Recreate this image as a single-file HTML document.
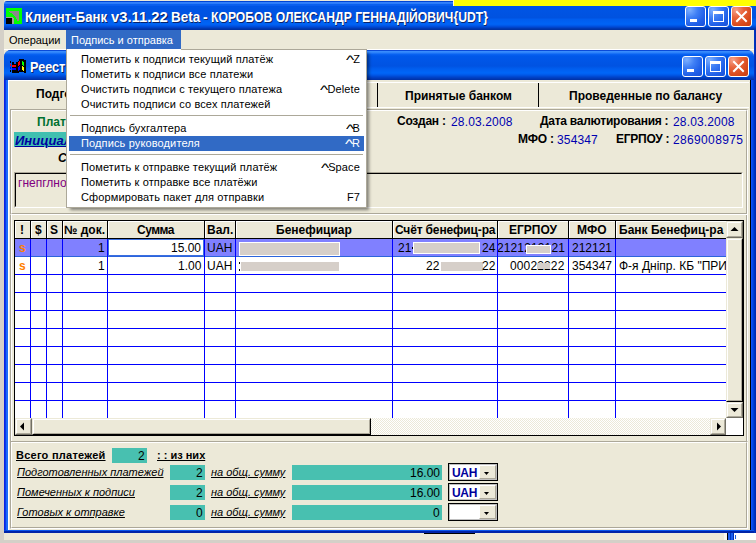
<!DOCTYPE html>
<html><head><meta charset="utf-8">
<style>
*{box-sizing:border-box}
html,body{margin:0;padding:0}
body{width:756px;height:543px;overflow:hidden;position:relative;background:#d4d0c8;font-family:"Liberation Sans",sans-serif;font-size:11px;color:#000}
.a{position:absolute}
.t{position:absolute;white-space:pre;line-height:1}
.tb{background:linear-gradient(to bottom,#0044d4 0px,#0044d4 1px,#3684fc 1px,#2878f8 3px,#0a62f0 3px,#0a5cec 5px,#0055e5 5px,#0052e0 17px,#005cee 18px,#0064f6 23px,#005ef0 24px,#0048d4 26px,#0034a8 28px,#0030a0 29px)}
.mtb{background:linear-gradient(to bottom,#0a4ad8 0px,#0a4ad8 1px,#3d8fff 1px,#2a7ff8 3px,#0a64f4 4px,#0058ea 6px,#0053e2 16px,#005eef 19px,#0066f8 23px,#0058e8 25px,#0044cc 27px,#0030a4 30px)}
.btn{position:absolute;width:21px;height:21px;border:1px solid #fff;border-radius:3px;background:radial-gradient(circle at 20% 15%,#7db0ff 0,#3f7ff5 35%,#1f5fe8 70%,#1850d8 100%)}
.btnc{background:radial-gradient(circle at 20% 15%,#f5a088 0,#e8643c 35%,#d84a1c 70%,#c83e10 100%)}
.mi{position:absolute;left:0;width:300px;height:15px}
.mi span{position:absolute;top:1px;white-space:pre;line-height:13px}
.mi .l{left:15px}
.mi .r{right:8px}
.hl{background:#316ac5;color:#fff}
.sep{position:absolute;left:3px;width:294px;height:2px;border-top:1px solid #aca899;border-bottom:1px solid #fff}
.b{font-weight:bold}
.blue{color:#0000b0;letter-spacing:0.15px}
</style></head><body>

<!-- main window bg -->
<div class="a" style="left:4px;top:0;width:752px;height:540px;background:#ece9d8"></div>

<!-- main title bar -->
<div class="a tb" style="left:4px;top:1px;width:752px;height:29px;border-top-left-radius:3px"></div>
<!-- yellow strip -->
<div class="a" style="left:453px;top:0;width:303px;height:6px;background:#ffff00"></div>
<div class="a" style="left:453px;top:0;width:1px;height:6px;background:#fff8e0"></div>

<!-- app icon -->
<svg class="a" style="left:6px;top:8px" width="16" height="16" viewBox="0 0 16 16" shape-rendering="crispEdges">
<rect x="0" y="0" width="16" height="16" fill="#00ff00"/>
<path d="M3 3H13V13H11V11H10V9H9V8H8V7H7V6H6V5H4V4H3Z" fill="#8a8a8a"/>
<rect x="0" y="9" width="7" height="1" fill="#a0a0a0"/>
<rect x="6" y="10" width="2" height="6" fill="#a0a0a0"/>
<rect x="0" y="10" width="6" height="6" fill="#000"/>
</svg>
<!-- title text -->
<div class="t b" style="left:25px;top:10px;font-size:14px;color:#fff;transform-origin:0 0;text-shadow:1px 1px 0 #0a246a;transform:scaleX(0.942)">Клиент-Банк</div>
<div class="t b" style="left:111px;top:10px;font-size:14px;color:#fff;transform-origin:0 0;text-shadow:1px 1px 0 #0a246a;transform:scaleX(1.058)">v3.11.22</div>
<div class="t b" style="left:171px;top:10px;font-size:14px;color:#fff;transform-origin:0 0;text-shadow:1px 1px 0 #0a246a;transform:scaleX(0.96)">Beta</div>
<div class="t b" style="left:203px;top:10px;font-size:14px;color:#fff;transform-origin:0 0;text-shadow:1px 1px 0 #0a246a">-</div>
<div class="t b" style="left:211px;top:10px;font-size:14px;color:#fff;transform-origin:0 0;text-shadow:1px 1px 0 #0a246a;transform:scaleX(0.870)">КОРОБОВ ОЛЕКСАНДР ГЕННАДІЙОВИЧ{UDT}</div>
<!-- main title buttons -->
<div class="btn" style="left:685px;top:6px"><div class="a" style="left:4px;top:12px;width:7px;height:3px;background:#fff"></div></div>
<div class="btn" style="left:708px;top:6px"><div class="a" style="left:4px;top:4px;width:11px;height:11px;border:1px solid #fff;border-top-width:3px"></div></div>
<div class="btn btnc" style="left:731px;top:6px">
<svg class="a" style="left:0;top:0" width="19" height="19" viewBox="0 0 19 19"><path d="M5 5 L14 14 M14 5 L5 14" stroke="#fff" stroke-width="2" stroke-linecap="square"/></svg></div>

<!-- right main frame -->
<div class="a" style="left:754px;top:30px;width:1px;height:510px;background:#0034c4"></div><div class="a" style="left:755px;top:30px;width:1px;height:510px;background:#002cb0"></div>

<!-- menu bar -->
<div class="a" style="left:4px;top:30px;width:750px;height:19px;background:#ece9d8"></div>
<div class="t" style="left:9px;top:35px">Операции</div>
<div class="a hl" style="left:66px;top:30px;width:115px;height:19px"></div>
<div class="t" style="left:71px;top:35px;color:#fff">Подпись и отправка</div>
<div class="a" style="left:4px;top:49px;width:750px;height:1px;background:#fff"></div>

<!-- MDI window frame -->
<div class="a" style="left:4px;top:50px;width:750px;height:483px;background:#0046dc;border-top-left-radius:7px;border-top-right-radius:7px"></div>
<div class="a mtb" style="left:4px;top:50px;width:750px;height:30px;border-top-left-radius:7px;border-top-right-radius:7px"></div>
<div class="a" style="left:4px;top:80px;width:1px;height:450px;background:#0a22e0"></div>
<div class="a" style="left:5px;top:80px;width:1px;height:450px;background:#0838ec"></div>
<div class="a" style="left:6px;top:80px;width:2px;height:450px;background:#1a6af8"></div>
<div class="a" style="left:751px;top:80px;width:1px;height:450px;background:#0a52f8"></div><div class="a" style="left:752px;top:80px;width:1px;height:450px;background:#0848e8"></div><div class="a" style="left:753px;top:80px;width:1px;height:450px;background:#0040d8"></div>
<div class="a" style="left:4px;top:531px;width:750px;height:2px;background:#0024a8"></div><div class="a" style="left:7px;top:530px;width:747px;height:1px;background:#0a56ec"></div>
<!-- client -->
<div class="a" style="left:8px;top:80px;width:743px;height:450px;background:#ece9d8"></div>
<div class="a" style="left:750px;top:80px;width:1px;height:450px;background:#000"></div>

<!-- MDI icon (windows flag) -->
<svg class="a" style="left:8px;top:56px" width="20" height="20" viewBox="0 0 20 20" shape-rendering="crispEdges">
<path d="M8 6H10V5H11V3H16V4H18V17H16V16H11V17H4V15H8Z" fill="#000"/>
<rect x="2" y="5" width="1" height="2" fill="#000"/><rect x="2" y="8" width="1" height="2" fill="#f00"/><rect x="2" y="11" width="1" height="2" fill="#00f"/><rect x="2" y="14" width="1" height="2" fill="#000"/>
<rect x="4" y="6" width="2" height="2" fill="#000"/><rect x="4" y="9" width="4" height="2" fill="#f00"/><rect x="4" y="12" width="4" height="2" fill="#00f"/>
<rect x="4" y="8" width="4" height="1" fill="#000"/><rect x="4" y="11" width="4" height="1" fill="#000"/><rect x="4" y="14" width="4" height="1" fill="#000"/>
<path d="M10 6H11V5H12V9H11V10H10Z" fill="#f00"/>
<path d="M14 5H15V6H16V10H15V9H14Z" fill="#0f0"/>
<path d="M10 11H11V10H12V14H11V15H10Z" fill="#00f"/>
<path d="M14 10H15V11H16V15H15V14H14Z" fill="#ff0"/>
</svg>
<div class="t b" style="left:30px;top:60px;font-size:14px;color:#fff;transform:scaleX(0.905);transform-origin:0 0;text-shadow:1px 1px 0 #0a246a">Реестр платежей</div>

<!-- MDI buttons -->
<div class="btn" style="left:682px;top:56px"><div class="a" style="left:4px;top:12px;width:7px;height:3px;background:#fff"></div></div>
<div class="btn" style="left:705px;top:56px"><div class="a" style="left:4px;top:4px;width:11px;height:11px;border:1px solid #fff;border-top-width:3px"></div></div>
<div class="btn btnc" style="left:728px;top:56px">
<svg class="a" style="left:0;top:0" width="19" height="19" viewBox="0 0 19 19"><path d="M5 5 L14 14 M14 5 L5 14" stroke="#fff" stroke-width="2" stroke-linecap="square"/></svg></div>

<!-- tab row -->
<div class="a" style="left:8px;top:80px;width:1px;height:450px;background:#fff"></div>
<div class="a" style="left:8px;top:80px;width:60px;height:1px;background:#fff"></div><div class="a" style="left:66px;top:82px;width:683px;height:1px;background:#fff"></div>
<div class="a" style="left:377px;top:83px;width:1px;height:24px;background:#000"></div>
<div class="a" style="left:538px;top:83px;width:1px;height:24px;background:#000"></div>
<div class="a" style="left:66px;top:107px;width:683px;height:1px;background:#fff"></div>
<div class="t b" style="left:36px;top:88px;font-size:12px">Подготовленные</div>
<div class="t b" style="left:405px;top:90px;font-size:12px">Принятые банком</div>
<div class="t b" style="left:569px;top:90px;font-size:12px">Проведенные по балансу</div>

<!-- header panel -->
<div class="a" style="left:10px;top:109px;width:738px;height:106px;border-top:1px solid #aca899;border-left:1px solid #aca899;border-right:1px solid #fff;border-bottom:1px solid #fff"></div>
<div class="a" style="left:11px;top:110px;width:736px;height:104px;border-top:1px solid #fff;border-left:1px solid #fff;border-right:1px solid #aca899;border-bottom:1px solid #aca899"></div>

<div class="t b" style="left:37px;top:116px;font-size:12px;color:#007030">Платіжне доручення</div>
<div class="a" style="left:14px;top:132px;width:200px;height:15px;background:#40c0b0"></div>
<div class="t b" style="left:15px;top:134px;font-size:13px;font-style:italic;color:#0000a0;text-decoration:underline">Инициализация</div>
<div class="t b" style="left:58px;top:152px;font-size:12px;font-style:italic">Статус</div>

<div class="t b" style="left:397px;top:115px;font-size:12px;letter-spacing:-0.25px">Создан :</div>
<div class="t blue" style="left:451px;top:116px;font-size:12px">28.03.2008</div>
<div class="t b" style="left:540px;top:115px;font-size:12px;letter-spacing:-0.25px">Дата валютирования :</div>
<div class="t blue" style="left:673px;top:116px;font-size:12px">28.03.2008</div>
<div class="t b" style="left:518px;top:133px;font-size:12px;letter-spacing:-0.25px">МФО :</div>
<div class="t blue" style="left:557px;top:134px;font-size:12px">354347</div>
<div class="t b" style="left:616px;top:133px;font-size:12px;letter-spacing:-0.25px">ЕГРПОУ :</div>
<div class="t blue" style="left:673px;top:134px;font-size:12px;letter-spacing:0.35px">2869008975</div>

<!-- memo -->
<div class="a" style="left:14px;top:172px;width:729px;height:36px;border-top:1px solid #aca899;border-left:1px solid #aca899;border-right:1px solid #fff;border-bottom:1px solid #fff"></div>
<div class="a" style="left:15px;top:173px;width:727px;height:34px;border-top:1px solid #000;border-left:1px solid #000;border-right:1px solid #ece9d8;border-bottom:1px solid #ece9d8"></div>
<div class="t" style="left:18px;top:177px;font-size:12px;color:#800080">гнепглнор</div>

<!-- grid panel -->
<div class="a" style="left:10px;top:214px;width:738px;height:227px;border-top:1px solid #fff;border-left:1px solid #aca899;border-right:1px solid #fff;border-bottom:0"></div>
<div class="a" style="left:11px;top:215px;width:736px;height:226px;border-top:0;border-left:1px solid #fff;border-right:1px solid #aca899;border-bottom:0"></div>
<!-- bottom panel -->
<div class="a" style="left:10px;top:441px;width:738px;height:88px;border-top:1px solid #aca899;border-left:1px solid #aca899;border-right:1px solid #fff;border-bottom:1px solid #fff"></div>
<div class="a" style="left:11px;top:442px;width:736px;height:86px;border-top:1px solid #fff;border-left:1px solid #fff;border-right:1px solid #aca899;border-bottom:1px solid #aca899"></div>

<div class="a" style="left:14px;top:220px;width:730px;height:216px;background:#fff"></div>
<div class="a" style="left:14px;top:220px;width:730px;height:1px;background:#000"></div>
<div class="a" style="left:14px;top:220px;width:1px;height:216px;background:#000"></div>
<div class="a" style="left:743px;top:220px;width:1px;height:216px;background:#000"></div>
<div class="a" style="left:14px;top:435px;width:730px;height:1px;background:#000"></div>
<div class="a" style="left:15px;top:221px;width:711px;height:17px;background:#ece9d8"></div>
<div class="a" style="left:15px;top:238px;width:711px;height:1px;background:#000"></div>
<div class="a" style="left:15px;top:221px;width:15px;height:1px;background:#fff"></div>
<div class="a" style="left:15px;top:221px;width:1px;height:17px;background:#fff"></div>
<div class="a" style="left:31px;top:221px;width:15px;height:1px;background:#fff"></div>
<div class="a" style="left:31px;top:221px;width:1px;height:17px;background:#fff"></div>
<div class="a" style="left:47px;top:221px;width:15px;height:1px;background:#fff"></div>
<div class="a" style="left:47px;top:221px;width:1px;height:17px;background:#fff"></div>
<div class="a" style="left:63px;top:221px;width:44px;height:1px;background:#fff"></div>
<div class="a" style="left:63px;top:221px;width:1px;height:17px;background:#fff"></div>
<div class="a" style="left:108px;top:221px;width:96px;height:1px;background:#fff"></div>
<div class="a" style="left:108px;top:221px;width:1px;height:17px;background:#fff"></div>
<div class="a" style="left:205px;top:221px;width:30px;height:1px;background:#fff"></div>
<div class="a" style="left:205px;top:221px;width:1px;height:17px;background:#fff"></div>
<div class="a" style="left:236px;top:221px;width:156px;height:1px;background:#fff"></div>
<div class="a" style="left:236px;top:221px;width:1px;height:17px;background:#fff"></div>
<div class="a" style="left:393px;top:221px;width:104px;height:1px;background:#fff"></div>
<div class="a" style="left:393px;top:221px;width:1px;height:17px;background:#fff"></div>
<div class="a" style="left:498px;top:221px;width:70px;height:1px;background:#fff"></div>
<div class="a" style="left:498px;top:221px;width:1px;height:17px;background:#fff"></div>
<div class="a" style="left:569px;top:221px;width:46px;height:1px;background:#fff"></div>
<div class="a" style="left:569px;top:221px;width:1px;height:17px;background:#fff"></div>
<div class="a" style="left:616px;top:221px;width:110px;height:1px;background:#fff"></div>
<div class="a" style="left:616px;top:221px;width:1px;height:17px;background:#fff"></div>
<div class="a" style="left:30px;top:221px;width:1px;height:17px;background:#000"></div>
<div class="a" style="left:46px;top:221px;width:1px;height:17px;background:#000"></div>
<div class="a" style="left:62px;top:221px;width:1px;height:17px;background:#000"></div>
<div class="a" style="left:107px;top:221px;width:1px;height:17px;background:#000"></div>
<div class="a" style="left:204px;top:221px;width:1px;height:17px;background:#000"></div>
<div class="a" style="left:235px;top:221px;width:1px;height:17px;background:#000"></div>
<div class="a" style="left:392px;top:221px;width:1px;height:17px;background:#000"></div>
<div class="a" style="left:497px;top:221px;width:1px;height:17px;background:#000"></div>
<div class="a" style="left:568px;top:221px;width:1px;height:17px;background:#000"></div>
<div class="a" style="left:615px;top:221px;width:1px;height:17px;background:#000"></div>
<div class="a" style="left:15px;top:239px;width:711px;height:17px;background:#8080ff"></div>
<div class="a" style="left:15px;top:256px;width:711px;height:1px;background:#2c64dc"></div>
<div class="a" style="left:15px;top:274px;width:711px;height:1px;background:#0000ff"></div>
<div class="a" style="left:15px;top:292px;width:711px;height:1px;background:#0000ff"></div>
<div class="a" style="left:15px;top:310px;width:711px;height:1px;background:#0000ff"></div>
<div class="a" style="left:15px;top:328px;width:711px;height:1px;background:#0000ff"></div>
<div class="a" style="left:15px;top:346px;width:711px;height:1px;background:#0000ff"></div>
<div class="a" style="left:15px;top:364px;width:711px;height:1px;background:#0000ff"></div>
<div class="a" style="left:15px;top:382px;width:711px;height:1px;background:#0000ff"></div>
<div class="a" style="left:15px;top:400px;width:711px;height:1px;background:#0000ff"></div>
<div class="a" style="left:30px;top:239px;width:1px;height:179px;background:#0000ff"></div>
<div class="a" style="left:46px;top:239px;width:1px;height:179px;background:#0000ff"></div>
<div class="a" style="left:62px;top:239px;width:1px;height:179px;background:#0000ff"></div>
<div class="a" style="left:107px;top:239px;width:1px;height:179px;background:#0000ff"></div>
<div class="a" style="left:204px;top:239px;width:1px;height:179px;background:#0000ff"></div>
<div class="a" style="left:235px;top:239px;width:1px;height:179px;background:#0000ff"></div>
<div class="a" style="left:392px;top:239px;width:1px;height:179px;background:#0000ff"></div>
<div class="a" style="left:497px;top:239px;width:1px;height:179px;background:#0000ff"></div>
<div class="a" style="left:568px;top:239px;width:1px;height:179px;background:#0000ff"></div>
<div class="a" style="left:615px;top:239px;width:1px;height:179px;background:#0000ff"></div>

<!-- header texts -->
<div class="t b" style="left:20px;top:224px;font-size:12px">!</div>
<div class="t b" style="left:35px;top:224px;font-size:12px">$</div>
<div class="t b" style="left:50px;top:224px;font-size:12px">S</div>
<div class="t b" style="left:64px;top:224px;font-size:12px">№ док.</div>
<div class="t b" style="left:137px;top:224px;font-size:12px;letter-spacing:-0.5px">Сумма</div>
<div class="t b" style="left:207px;top:224px;font-size:12px">Вал.</div>
<div class="t b" style="left:276px;top:224px;font-size:12px">Бенефициар</div>
<div class="t b" style="left:395px;top:224px;font-size:12px;letter-spacing:-0.15px">Счёт бенефиц-ра</div>
<div class="t b" style="left:509px;top:224px;font-size:12px">ЕГРПОУ</div>
<div class="t b" style="left:577px;top:224px;font-size:12px">МФО</div>
<div class="t b" style="left:619px;top:224px;font-size:12px">Банк Бенефиц-ра</div>

<!-- row 1 -->
<div class="t b" style="left:19px;top:242px;font-size:12px;color:#ff8000">s</div>
<div class="t" style="left:98px;top:242px;font-size:12px">1</div>
<div class="a" style="left:108px;top:239px;width:96px;height:17px;background:#fff;border:1px solid #3a6ee0"></div>
<div class="t" style="left:171px;top:242px;font-size:12px">15.00</div>
<div class="t" style="left:207px;top:242px;font-size:12px">UAH</div>
<div class="a" style="left:239px;top:242px;width:101px;height:14px;background:#d6cfc9;border:1px solid #fff"></div>
<div class="t" style="left:398px;top:242px;font-size:12px">21</div>
<div class="a" style="left:412px;top:247px;width:1px;height:2px;background:#000"></div>
<div class="a" style="left:413px;top:242px;width:67px;height:12px;background:#d6cfc9;border:1px solid #fff"></div>
<div class="t" style="left:482px;top:242px;font-size:12px">24</div>
<div class="a" style="left:498px;top:239px;width:70px;height:17px;overflow:hidden"><div class="t" style="right:3px;top:3px;font-size:12px;letter-spacing:0.13px">2121212121</div></div>
<div class="a" style="left:526px;top:245px;width:25px;height:9px;background:#d6cfc9;border:1px solid #fff"></div>
<div class="t" style="left:572px;top:242px;font-size:12px">212121</div>

<!-- row 2 -->
<div class="t b" style="left:19px;top:260px;font-size:12px;color:#ff8000">s</div>
<div class="t" style="left:98px;top:260px;font-size:12px">1</div>
<div class="t" style="left:178px;top:260px;font-size:12px">1.00</div>
<div class="t" style="left:207px;top:260px;font-size:12px">UAH</div>
<div class="a" style="left:239px;top:262px;width:1px;height:2px;background:#000"></div>
<div class="a" style="left:239px;top:269px;width:1px;height:2px;background:#000"></div>
<div class="a" style="left:241px;top:262px;width:98px;height:9px;background:#d6cfc9"></div>
<div class="t" style="left:426px;top:260px;font-size:12px">22</div>
<div class="a" style="left:441px;top:262px;width:42px;height:9px;background:#d6cfc9"></div>
<div class="t" style="left:482px;top:260px;font-size:12px">22</div>
<div class="t" style="left:510px;top:260px;font-size:12px;letter-spacing:0.13px">00022222</div>
<div class="a" style="left:537px;top:263px;width:13px;height:6px;background:#d6cfc9"></div>
<div class="t" style="left:572px;top:260px;font-size:12px">354347</div>
<div class="a" style="left:616px;top:257px;width:110px;height:17px;overflow:hidden"><div class="t" style="left:3px;top:3px;font-size:12px">Ф-я Дніпр. КБ "ПРИВАТБАНК"</div></div>

<!-- horizontal scrollbar -->
<div class="a" style="left:15px;top:418px;width:711px;height:17px;background-color:#fff;background-image:repeating-conic-gradient(#ece9d8 0 25%,#fff 0 50%);background-size:2px 2px"></div>
<div class="a" style="left:15px;top:418px;width:17px;height:17px;background:#ece9d8;border-top:1px solid #ece9d8;border-left:1px solid #ece9d8;border-right:1px solid #716f64;border-bottom:1px solid #716f64"><div class="a" style="left:0;top:0;width:15px;height:15px;border-top:1px solid #fff;border-left:1px solid #fff;border-right:1px solid #aca899;border-bottom:1px solid #aca899"></div></div>
<svg class="a" style="left:19px;top:422px" width="8" height="9"><path d="M5 0.5 L1 4.5 L5 8.5 Z" fill="#000"/></svg>
<div class="a" style="left:32px;top:418px;width:339px;height:17px;background:#ece9d8;border-top:1px solid #ece9d8;border-left:1px solid #ece9d8;border-right:1px solid #000;border-bottom:1px solid #000"><div class="a" style="left:0;top:0;width:337px;height:15px;border-top:1px solid #fff;border-left:1px solid #fff;border-right:1px solid #aca899;border-bottom:1px solid #aca899"></div></div>
<div class="a" style="left:710px;top:418px;width:16px;height:17px;background:#ece9d8;border-top:1px solid #ece9d8;border-left:1px solid #ece9d8;border-right:1px solid #716f64;border-bottom:1px solid #716f64"><div class="a" style="left:0;top:0;width:14px;height:15px;border-top:1px solid #fff;border-left:1px solid #fff;border-right:1px solid #aca899;border-bottom:1px solid #aca899"></div></div>
<svg class="a" style="left:714px;top:422px" width="8" height="9"><path d="M3 0.5 L7 4.5 L3 8.5 Z" fill="#000"/></svg>
<div class="a" style="left:726px;top:418px;width:17px;height:17px;background:#fff"></div>

<!-- vertical scrollbar -->
<div class="a" style="left:726px;top:221px;width:17px;height:197px;background:#ece9d8"></div>
<div class="a" style="left:726px;top:221px;width:17px;height:17px;background:#ece9d8;border-top:1px solid #ece9d8;border-left:1px solid #ece9d8;border-right:1px solid #716f64;border-bottom:1px solid #716f64"><div class="a" style="left:0;top:0;width:15px;height:15px;border-top:1px solid #fff;border-left:1px solid #fff;border-right:1px solid #aca899;border-bottom:1px solid #aca899"></div></div>
<svg class="a" style="left:730px;top:226px" width="9" height="6"><path d="M0.5 5 L4.5 1 L8.5 5 Z" fill="#000"/></svg>
<div class="a" style="left:726px;top:238px;width:17px;height:164px;background:#ece9d8;border-top:1px solid #ece9d8;border-left:1px solid #ece9d8;border-right:1px solid #000;border-bottom:1px solid #000"><div class="a" style="left:0;top:0;width:15px;height:162px;border-top:1px solid #fff;border-left:1px solid #fff;border-right:1px solid #aca899;border-bottom:1px solid #aca899"></div></div>
<div class="a" style="left:726px;top:402px;width:17px;height:16px;background:#ece9d8;border-top:1px solid #ece9d8;border-left:1px solid #ece9d8;border-right:1px solid #716f64;border-bottom:1px solid #716f64"><div class="a" style="left:0;top:0;width:15px;height:14px;border-top:1px solid #fff;border-left:1px solid #fff;border-right:1px solid #aca899;border-bottom:1px solid #aca899"></div></div>
<svg class="a" style="left:730px;top:407px" width="9" height="6"><path d="M0.5 1 L4.5 5 L8.5 1 Z" fill="#000"/></svg>

<!-- bottom summary -->
<div class="t b" style="left:16px;top:450px;font-size:11px;letter-spacing:0.25px;text-decoration:underline">Всего платежей</div>
<div class="a" style="left:112px;top:448px;width:35px;height:15px;background:#48c0b0"></div>
<div class="t" style="left:138px;top:450px;font-size:12px">2</div>
<div class="t b" style="left:157px;top:450px;font-size:11px;letter-spacing:0px;text-decoration:underline">: : из них</div>

<div class="t" style="left:17px;top:467px;font-size:11px;font-style:italic;text-decoration:underline">Подготовленных платежей</div>
<div class="t" style="left:17px;top:487px;font-size:11px;font-style:italic;text-decoration:underline">Помеченных к подписи</div>
<div class="t" style="left:17px;top:507px;font-size:11px;font-style:italic;text-decoration:underline">Готовых к отправке</div>

<div class="a" style="left:170px;top:465px;width:35px;height:15px;background:#48c0b0"></div>
<div class="a" style="left:170px;top:485px;width:35px;height:15px;background:#48c0b0"></div>
<div class="a" style="left:170px;top:505px;width:35px;height:15px;background:#48c0b0"></div>
<div class="t" style="left:196px;top:467px;font-size:12px">2</div>
<div class="t" style="left:196px;top:487px;font-size:12px">2</div>
<div class="t" style="left:196px;top:507px;font-size:12px">0</div>

<div class="t" style="left:211px;top:467px;font-size:11px;font-style:italic;text-decoration:underline">на общ. сумму</div>
<div class="t" style="left:211px;top:487px;font-size:11px;font-style:italic;text-decoration:underline">на общ. сумму</div>
<div class="t" style="left:211px;top:507px;font-size:11px;font-style:italic;text-decoration:underline">на общ. сумму</div>

<div class="a" style="left:292px;top:465px;width:150px;height:15px;background:#48c0b0"></div>
<div class="a" style="left:292px;top:485px;width:150px;height:15px;background:#48c0b0"></div>
<div class="a" style="left:292px;top:505px;width:150px;height:15px;background:#48c0b0"></div>
<div class="t" style="left:410px;top:467px;font-size:12px">16.00</div>
<div class="t" style="left:410px;top:487px;font-size:12px">16.00</div>
<div class="t" style="left:433px;top:507px;font-size:12px">0</div>

<!-- combos -->
<div class="a" style="left:448px;top:463px;width:50px;height:18px;background:#fff;border:1px solid #000;box-shadow:inset 0 0 0 1px rgba(0,0,0,0.25)"></div>
<div class="a" style="left:448px;top:483px;width:50px;height:18px;background:#fff;border:1px solid #000;box-shadow:inset 0 0 0 1px rgba(0,0,0,0.25)"></div>
<div class="a" style="left:448px;top:503px;width:50px;height:18px;background:#fff;border:1px solid #000;box-shadow:inset 0 0 0 1px rgba(0,0,0,0.25)"></div>
<div class="t b" style="left:452px;top:467px;font-size:12px;letter-spacing:-0.3px;color:#00009c">UAH</div>
<div class="t b" style="left:452px;top:487px;font-size:12px;letter-spacing:-0.3px;color:#00009c">UAH</div>
<div class="a" style="left:479px;top:465px;width:17px;height:14px;background:#ece9d8;border-top:1px solid #fff;border-left:1px solid #fff;border-right:1px solid #aca899;border-bottom:1px solid #aca899"></div>
<div class="a" style="left:479px;top:485px;width:17px;height:14px;background:#ece9d8;border-top:1px solid #fff;border-left:1px solid #fff;border-right:1px solid #aca899;border-bottom:1px solid #aca899"></div>
<div class="a" style="left:479px;top:505px;width:17px;height:14px;background:#ece9d8;border-top:1px solid #fff;border-left:1px solid #fff;border-right:1px solid #aca899;border-bottom:1px solid #aca899"></div>
<svg class="a" style="left:484px;top:472px" width="5" height="3"><path d="M0 0H5L2.5 3Z" fill="#000"/></svg>
<svg class="a" style="left:484px;top:492px" width="5" height="3"><path d="M0 0H5L2.5 3Z" fill="#000"/></svg>
<svg class="a" style="left:484px;top:512px" width="5" height="3"><path d="M0 0H5L2.5 3Z" fill="#000"/></svg>

<!-- bottom misc -->
<div class="a" style="left:424px;top:533px;width:51px;height:1px;background:#000"></div>
<div class="a" style="left:724px;top:533px;width:32px;height:7px;background:#fff"></div>
<div class="a" style="left:724px;top:533px;width:3px;height:7px;background:#f8f6ee"></div>
<div class="a" style="left:727px;top:533px;width:7px;height:7px;background:#1a5ef0;border-left:1px solid #000"></div>
<div class="a" style="left:730px;top:533px;width:1px;height:7px;background:#0038c0"></div>
<div class="a" style="left:733px;top:533px;width:1px;height:7px;background:#0030b0"></div>
<div class="a" style="left:735px;top:535px;width:1px;height:4px;background:#1c5fe5"></div>

<!-- dropdown menu -->
<div class="a" style="left:66px;top:49px;width:301px;height:159px;background:#fff;border:1px solid #aca899;box-shadow:3px 3px 3px -1px rgba(0,0,0,0.45)"></div>
<div class="a" style="left:67px;top:49px;width:114px;height:1px;background:#fff"></div>
<div class="t" style="letter-spacing:0.13px;left:81px;top:54px">Пометить к подписи текущий платёж</div>
<div class="t" style="letter-spacing:0.13px;left:81px;top:69px">Пометить к подписи все платежи</div>
<div class="t" style="letter-spacing:0.13px;left:81px;top:84px">Очистить подписи с текущего платежа</div>
<div class="t" style="letter-spacing:0.13px;left:81px;top:99px">Очистить подписи со всех платежей</div>
<div class="a" style="left:70px;top:115px;width:293px;height:1px;background:#aca899"></div>
<div class="t" style="letter-spacing:0.13px;left:81px;top:123px">Подпись бухгалтера</div>
<div class="a hl" style="left:69px;top:136px;width:295px;height:15px"></div>
<div class="t" style="letter-spacing:0.13px;left:81px;top:138px;color:#fff">Подпись руководителя</div>
<div class="a" style="left:70px;top:154px;width:293px;height:1px;background:#aca899"></div>
<div class="t" style="letter-spacing:0.13px;left:81px;top:162px">Пометить к отправке текущий платёж</div>
<div class="t" style="letter-spacing:0.13px;left:81px;top:177px">Пометить к отправке все платёжи</div>
<div class="t" style="letter-spacing:0.13px;left:81px;top:192px">Сформировать пакет для отправки</div>
<div class="t" style="letter-spacing:0.13px;right:396px;top:54px"><span style="display:inline-block;width:7px;transform:scale(1.6,1.1);transform-origin:0 20%">^</span>Z</div>
<div class="t" style="letter-spacing:0.13px;right:396px;top:84px"><span style="display:inline-block;width:7px;transform:scale(1.6,1.1);transform-origin:0 20%">^</span>Delete</div>
<div class="t" style="letter-spacing:0.13px;right:396px;top:123px"><span style="display:inline-block;width:7px;transform:scale(1.6,1.1);transform-origin:0 20%">^</span>B</div>
<div class="t" style="letter-spacing:0.13px;right:396px;top:138px;color:#fff"><span style="display:inline-block;width:7px;transform:scale(1.6,1.1);transform-origin:0 20%">^</span>R</div>
<div class="t" style="letter-spacing:0.13px;right:396px;top:162px"><span style="display:inline-block;width:7px;transform:scale(1.6,1.1);transform-origin:0 20%">^</span>Space</div>
<div class="t" style="letter-spacing:0.13px;right:396px;top:192px">F7</div>

</body></html>
